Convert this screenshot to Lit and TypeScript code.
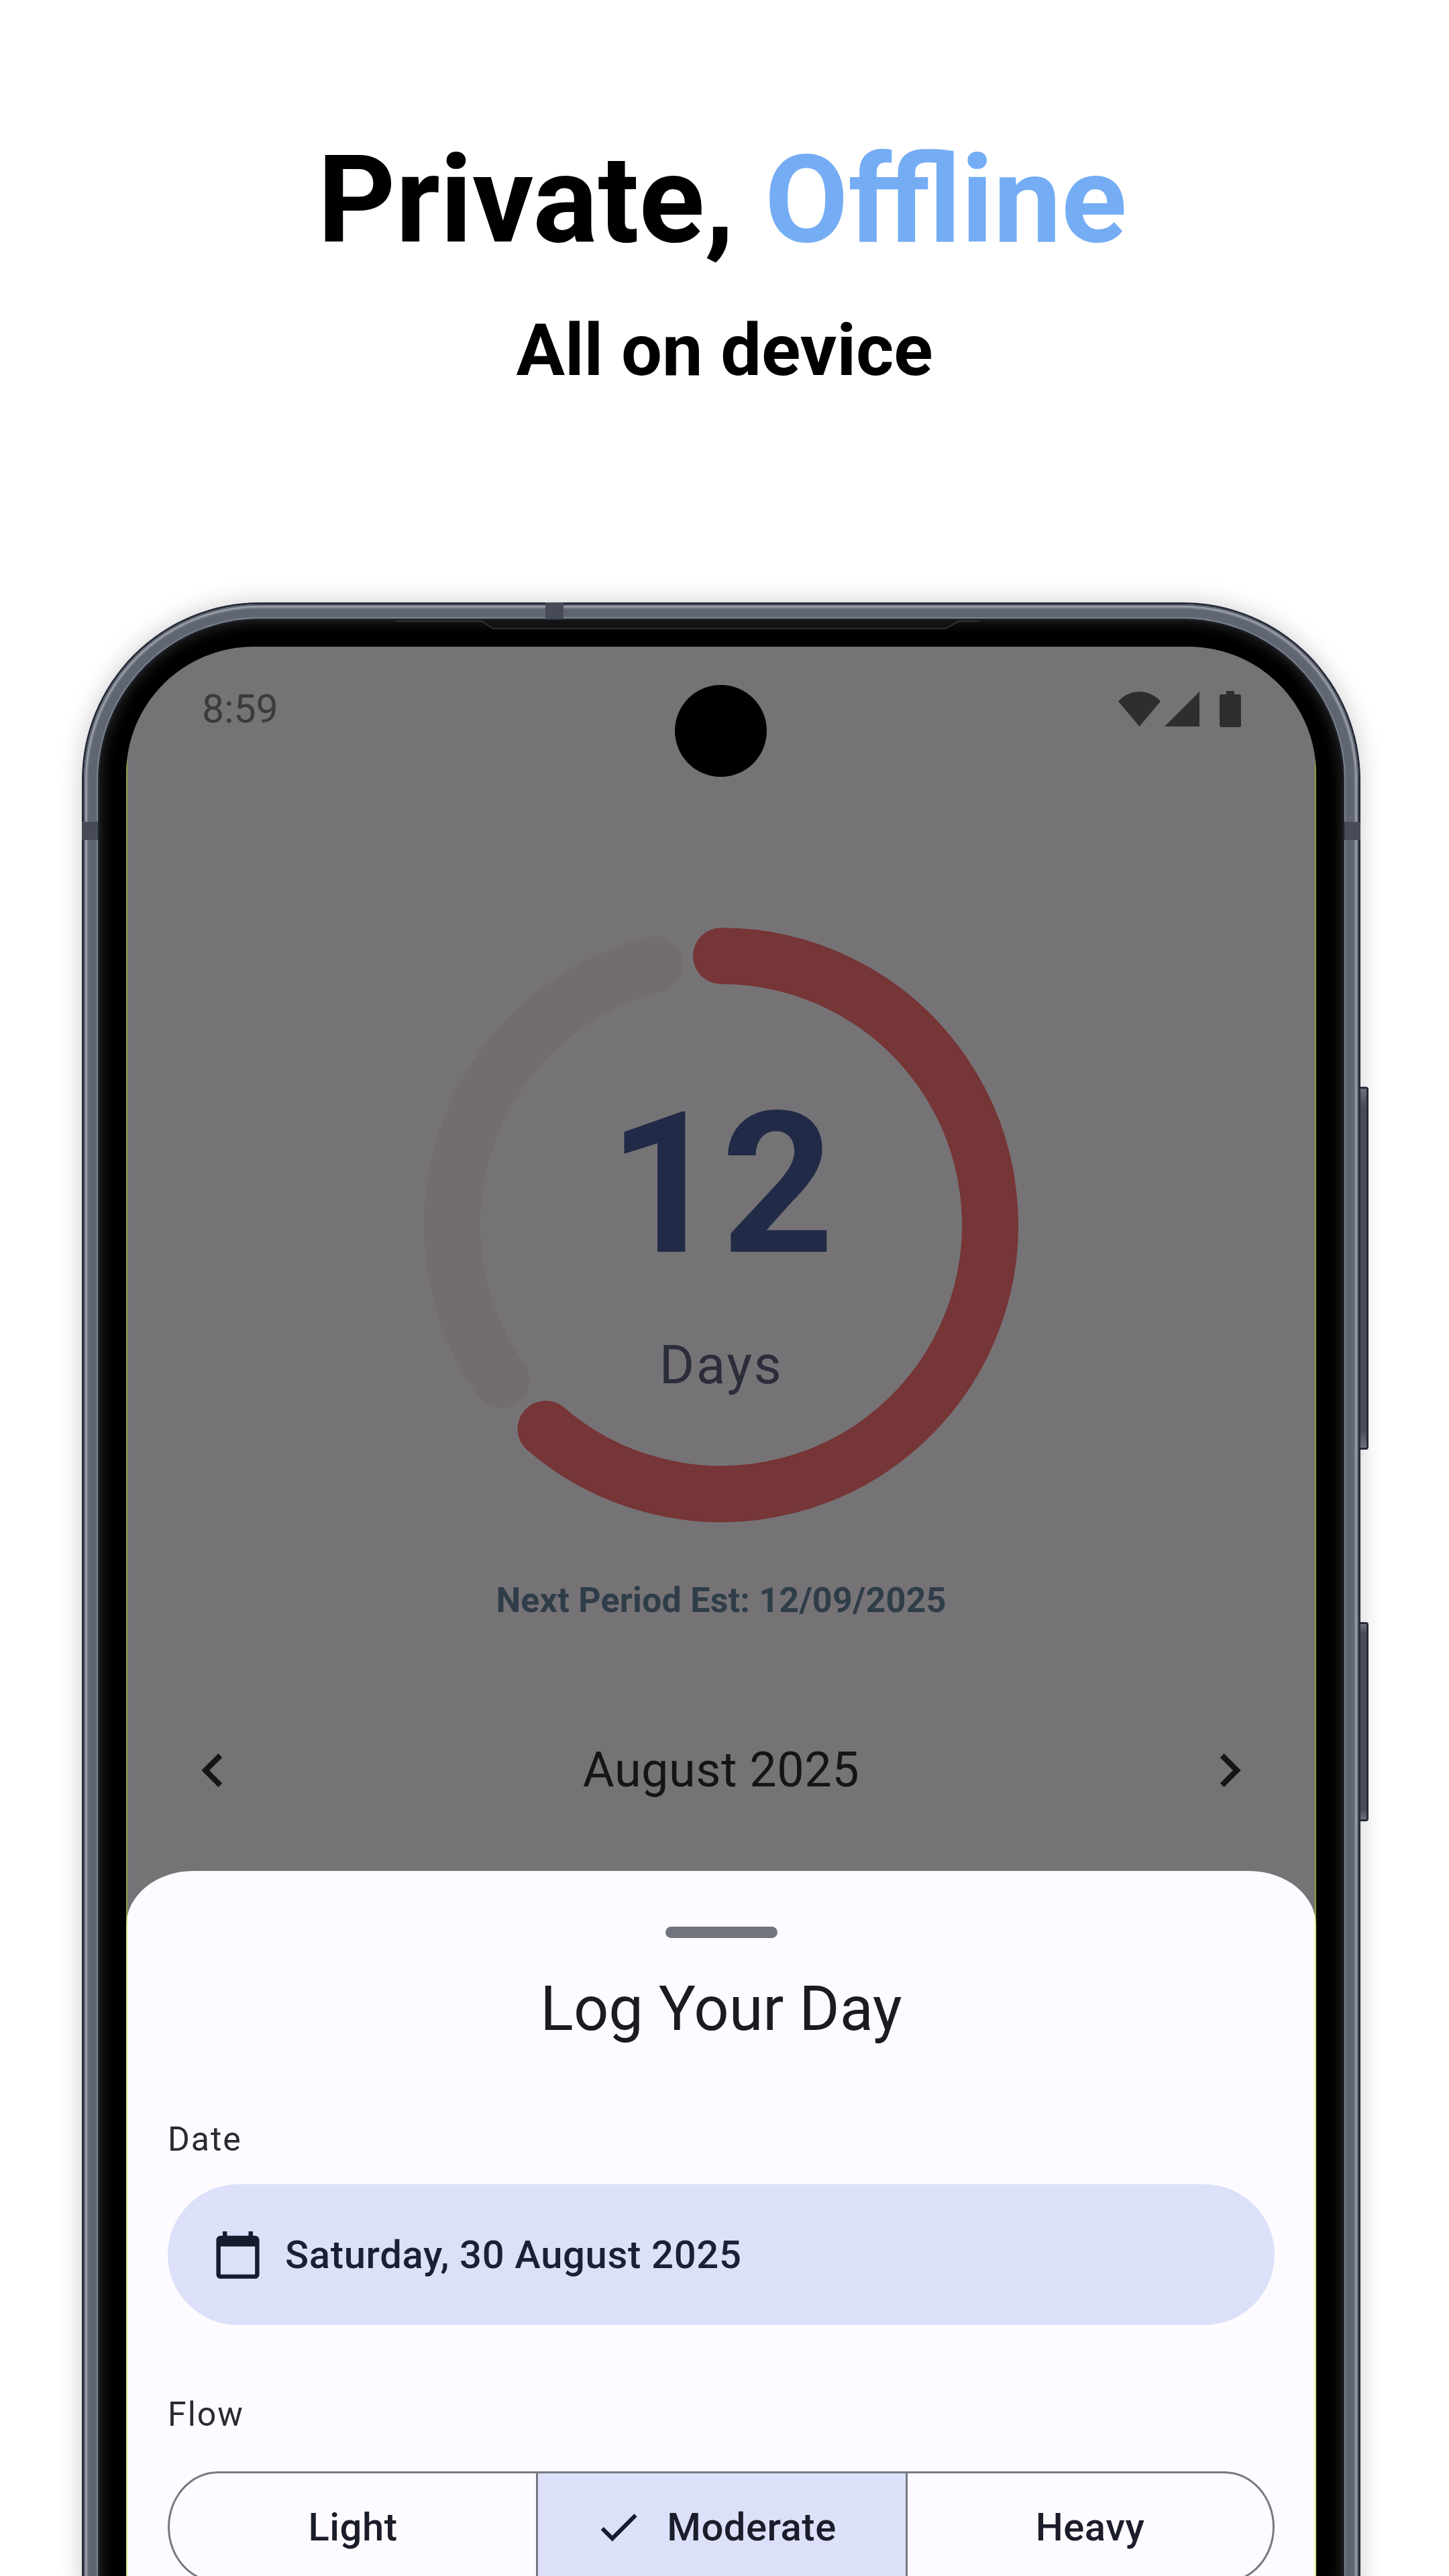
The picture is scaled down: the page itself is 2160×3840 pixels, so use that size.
import { LitElement, css, html, svg } from 'lit'
import { customElement } from 'lit/decorators.js'
import { classMap } from 'lit/directives/class-map.js'

const RING_CENTER = 450
const RING_RADIUS = 401

// angles in degrees, clockwise from 12 o'clock
function arcPath(from: number, to: number) {
  const point = (deg: number) => {
    const rad = (deg * Math.PI) / 180
    return `${RING_CENTER + RING_RADIUS * Math.sin(rad)} ${RING_CENTER - RING_RADIUS * Math.cos(rad)}`
  }
  const large = to - from > 180 ? 1 : 0
  return `M${point(from)} A${RING_RADIUS} ${RING_RADIUS} 0 ${large} 1 ${point(to)}`
}

const flowOptions = [
  { label: 'Light', selected: false },
  { label: 'Moderate', selected: true },
  { label: 'Heavy', selected: false },
]

@customElement('app-root')
export class AppRoot extends LitElement {
  static styles = css`
    :host {
      display: block;
      width: 2160px;
      height: 3840px;
      overflow: hidden;
      background: #ffffff;
      font-family: Roboto, "Liberation Sans", sans-serif;
    }

    .hero {
      padding-top: 188px;
      text-align: center;
      color: #000000;
      font-weight: 700;
    }

    .hero h1 {
      margin: 0;
      padding-right: 7px;
      font-size: 181px;
      line-height: 220px;
      font-weight: 700;
    }

    .hero h1 span {
      color: #75adf4;
    }

    .hero h2 {
      margin: 49px 0 0;
      font-size: 108px;
      line-height: 130px;
      font-weight: 700;
    }

    .phone {
      position: relative;
      box-sizing: border-box;
      width: 1906px;
      height: 3200px;
      margin: 311px 0 0 122px;
      padding: 3px;
      border-radius: 265px;
      background: #252b38;
      box-shadow: 0 0 36px rgba(0, 0, 0, 0.2);
    }

    .metal {
      height: 100%;
      box-sizing: border-box;
      padding: 21px;
      border-radius: 262px;
      background: #5f6571;
      box-shadow:
        inset 0 0 0 2px #5f6571,
        inset 0 0 3px 5px #a0a5ae;
    }

    .rim {
      height: 100%;
      box-sizing: border-box;
      padding: 3px;
      border-radius: 241px;
      background: #1c2029;
      box-shadow: 0 0 2px 1px #a0a5ae;
    }

    .bezel {
      height: 100%;
      box-sizing: border-box;
      padding: 39px;
      border-radius: 238px;
      background: #000000;
      box-shadow: inset 0 0 20px 2px #262626;
    }

    .notch {
      position: absolute;
      left: 468px;
      top: 27px;
      width: 870px;
      height: 14px;
    }

    .band {
      position: absolute;
      background: #474b58;
    }

    .band.left {
      left: 0;
      top: 327px;
      width: 24px;
      height: 27px;
    }

    .band.right {
      right: 0;
      top: 327px;
      width: 24px;
      height: 27px;
    }

    .band.top {
      left: 691px;
      top: 0;
      width: 27px;
      height: 25px;
    }

    .side-button {
      position: absolute;
      left: 1906px;
      width: 12px;
      box-sizing: border-box;
      border-radius: 0 4px 4px 0;
      border: solid #252b38;
      border-width: 3px 3px 3px 0;
      background: linear-gradient(#6d717c, #474c58 5%, #474c58 95%, #6d717c);
    }

    .side-button.power {
      top: 722px;
      height: 541px;
    }

    .side-button.volume {
      top: 1520px;
      height: 297px;
    }

    .screen {
      position: relative;
      height: 100%;
      overflow: hidden;
      border-radius: 190px 190px 0 0;
      background: #767376;
    }

    .screen::before,
    .screen::after {
      content: '';
      position: absolute;
      top: 170px;
      bottom: 0;
      width: 2px;
      background: rgba(176, 214, 0, 0.45);
    }

    .screen::before {
      left: 0;
    }

    .screen::after {
      right: 0;
    }

    .camera {
      position: absolute;
      left: 818px;
      top: 57px;
      width: 137px;
      height: 137px;
      border-radius: 50%;
      background: #000000;
    }

    .status {
      display: flex;
      justify-content: space-between;
      align-items: center;
      padding: 53px 112px 0 113px;
      height: 80px;
      font-size: 59px;
      line-height: 80px;
      color: #3b3a3c;
    }

    .status-icons {
      display: flex;
      align-items: center;
    }

    .status-icons svg {
      display: block;
      fill: #2e2e2f;
    }

    .status-icons .signal {
      margin-left: 6px;
    }

    .status-icons .battery {
      margin-left: 30px;
    }

    .ring {
      display: grid;
      justify-items: center;
      margin-top: 279px;
    }

    .ring > * {
      grid-area: 1 / 1;
    }

    .ring svg {
      display: block;
      width: 900px;
      height: 900px;
      fill: none;
      stroke-width: 84;
      stroke-linecap: round;
    }

    .ring .track {
      stroke: #736d6d;
    }

    .ring .progress {
      stroke: #763536;
    }

    .ring-label {
      display: flex;
      flex-direction: column;
      align-items: center;
      padding-top: 240px;
    }

    .count {
      font-size: 294px;
      line-height: 300px;
      font-weight: 700;
      color: #212b47;
    }

    .days {
      margin-top: 69px;
      font-size: 80px;
      line-height: 100px;
      letter-spacing: 2.5px;
      color: #2b2d3a;
    }

    .next {
      margin-top: 75px;
      text-align: center;
      font-size: 52px;
      line-height: 70px;
      font-weight: 700;
      letter-spacing: 0.2px;
      color: #2f3d49;
    }

    .month {
      display: flex;
      justify-content: space-between;
      align-items: center;
      margin-top: 168px;
      padding: 0 79px;
      font-size: 72px;
      line-height: 100px;
      letter-spacing: 0.5px;
      color: #151517;
    }

    .month svg {
      display: block;
      width: 100px;
      height: 100px;
      fill: #151517;
    }

    .sheet {
      margin-top: 100px;
      height: 1200px;
      padding: 83px 62px 0;
      border-radius: 100px 100px 0 0 / 82px 82px 0 0;
      background: #fdfbff;
    }

    .handle {
      width: 167px;
      height: 17px;
      margin: 0 auto;
      border-radius: 9px;
      background: #71737d;
    }

    .sheet h3 {
      margin: 46px 0 0;
      text-align: center;
      font-size: 92px;
      line-height: 120px;
      font-weight: 400;
      color: #1b1b21;
    }

    .field-label {
      font-size: 50px;
      line-height: 70px;
      letter-spacing: 2px;
      color: #2a2a30;
    }

    .field-label.date {
      margin-top: 99px;
    }

    .field-label.flow {
      margin-top: 98px;
    }

    .date-pill {
      display: flex;
      align-items: center;
      gap: 32px;
      height: 210px;
      margin-top: 32px;
      padding-left: 66px;
      border-radius: 105px;
      background: #dce1f9;
      font-size: 58px;
      font-weight: 500;
      letter-spacing: 0.65px;
      color: #1b2034;
    }

    .date-pill svg {
      display: block;
      width: 77px;
      height: 77px;
      fill: #161b2e;
    }

    .segments {
      display: grid;
      grid-template-columns: 546fr 551fr 547fr;
      box-sizing: border-box;
      height: 166px;
      margin-top: 50px;
      overflow: hidden;
      border: 3px solid #777a83;
      border-radius: 75px / 83px;
    }

    .segment {
      display: flex;
      align-items: center;
      justify-content: center;
      gap: 35px;
      font-size: 58px;
      font-weight: 500;
      letter-spacing: 0.5px;
      color: #1b1d2a;
    }

    .segment + .segment {
      border-left: 3px solid #777a83;
    }

    .segment.selected {
      padding-right: 20px;
      background: #dce1f9;
    }

    .segment svg {
      display: block;
      width: 74px;
      height: 74px;
      fill: #161b2e;
    }
  `

  render() {
    return html`
      <header class="hero">
        <h1>Private, <span>Offline</span></h1>
        <h2>All on device</h2>
      </header>

      <div class="phone">
        <div class="metal">
          <div class="rim">
            <div class="bezel">
              <div class="screen">
                <div class="camera"></div>
                ${this.renderStatus()}
                ${this.renderRing()}
                <div class="next">Next Period Est: 12/09/2025</div>
                <div class="month">
                  <svg viewBox="0 0 24 24"><path d="M15.41 7.41 14 6l-6 6 6 6 1.41-1.41L10.83 12z" /></svg>
                  <span>August 2025</span>
                  <svg viewBox="0 0 24 24"><path d="M10 6 8.59 7.41 13.17 12l-4.58 4.59L10 18l6-6z" /></svg>
                </div>
                ${this.renderSheet()}
              </div>
            </div>
          </div>
        </div>
        <svg class="notch" viewBox="0 0 870 14">
          <path d="M0 1H128L145 12H820L839 1H870" fill="#121212" stroke="#3a3a3a" stroke-width="1.5" />
        </svg>
        <div class="band left"></div>
        <div class="band right"></div>
        <div class="band top"></div>
        <div class="side-button power"></div>
        <div class="side-button volume"></div>
      </div>
    `
  }

  private renderStatus() {
    return html`
      <div class="status">
        <span>8:59</span>
        <div class="status-icons">
          <svg width="63" height="52" viewBox="0 0 63 52"><path d="M31.5 52 0 14.5C8 5.5 19 0 31.5 0S55 5.5 63 14.5z" /></svg>
          <svg class="signal" width="52" height="52" viewBox="0 0 52 52"><path d="M0 52 52 0v52z" /></svg>
          <svg class="battery" width="32" height="54" viewBox="0 0 32 54"><path d="M10 0h12v5h7a3 3 0 0 1 3 3v43a3 3 0 0 1-3 3H3a3 3 0 0 1-3-3V8a3 3 0 0 1 3-3h7z" /></svg>
        </div>
      </div>
    `
  }

  private renderRing() {
    return html`
      <div class="ring">
        <svg viewBox="0 0 900 900">
          ${svg`<path class="track" d=${arcPath(234.8, 345.6)} />`}
          ${svg`<path class="progress" d=${arcPath(0, 220.7)} />`}
        </svg>
        <div class="ring-label">
          <div class="count">12</div>
          <div class="days">Days</div>
        </div>
      </div>
    `
  }

  private renderSheet() {
    return html`
      <section class="sheet">
        <div class="handle"></div>
        <h3>Log Your Day</h3>
        <div class="field-label date">Date</div>
        <div class="date-pill">
          <svg viewBox="0 0 24 24"><path d="M20 3h-1V1h-2v2H7V1H5v2H4c-1.1 0-2 .9-2 2v16c0 1.1.9 2 2 2h16c1.1 0 2-.9 2-2V5c0-1.1-.9-2-2-2zm0 18H4V8h16v13z" /></svg>
          <span>Saturday, 30 August 2025</span>
        </div>
        <div class="field-label flow">Flow</div>
        <div class="segments">
          ${flowOptions.map(
            (option) => html`
              <div class=${classMap({ segment: true, selected: option.selected })}>
                ${option.selected
                  ? html`<svg viewBox="0 0 24 24"><path d="M9 16.17 4.83 12l-1.41 1.41L9 19 21 7l-1.41-1.41z" /></svg>`
                  : ''}
                <span>${option.label}</span>
              </div>
            `,
          )}
        </div>
      </section>
    `
  }
}
